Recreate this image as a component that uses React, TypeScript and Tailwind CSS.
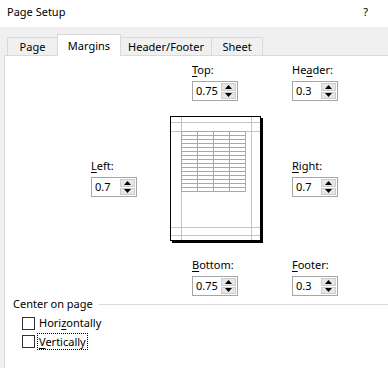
import React from "react";

function Tri({ up }: { up?: boolean }) {
  return (
    <svg width="7" height="4" viewBox="0 0 7 4" className="block">
      {up ? <path d="M0 4 L3.5 0 L7 4 Z" fill="#000" /> : <path d="M0 0 L7 0 L3.5 4 Z" fill="#000" />}
    </svg>
  );
}

function Spin({ pre, u, post, value }: { pre: string; u: string; post: string; value: string }) {
  return (
    <div className="flex flex-col">
      <div className="h-[16px] leading-[16px] text-black whitespace-nowrap">
        {pre}
        <span className="underline underline-offset-2">{u}</span>
        {post}
      </div>
      <div className="mt-[3px] w-[46px] h-[20px] border border-[#a6a6a6] bg-white flex items-center">
        <div className="flex-1 pl-[3px] leading-[16px] text-black">{value}</div>
        <div className="w-[15px] h-[16px] mr-[1px] flex flex-col gap-[1px]">
          <div className="flex-1 bg-[#e6e6e6] border border-[#cdcdcd] flex items-center justify-center">
            <Tri up />
          </div>
          <div className="flex-1 bg-[#e6e6e6] border border-[#cdcdcd] flex items-center justify-center">
            <Tri />
          </div>
        </div>
      </div>
    </div>
  );
}

function PagePreview() {
  const rows: number[] = [];
  for (let k = 0; k <= 15; k++) rows.push(15.5 + 4 * k);
  const cols = [11.5, 27.5, 43.5, 59.5, 75.5];
  return (
    <svg width="93" height="127" viewBox="0 0 93 127" className="block shrink-0">
      <rect x="2" y="2" width="91" height="125" fill="#000" />
      <rect x="0.5" y="0.5" width="90" height="124" fill="#fff" stroke="#000" />
      <g stroke="#c4c4c4" strokeWidth="1">
        <line x1="11.5" y1="1" x2="11.5" y2="124" />
        <line x1="81.5" y1="1" x2="81.5" y2="124" />
        <line x1="1" y1="6.5" x2="90" y2="6.5" />
        <line x1="1" y1="15.5" x2="90" y2="15.5" />
        <line x1="1" y1="111.5" x2="90" y2="111.5" />
        <line x1="1" y1="119.5" x2="90" y2="119.5" />
      </g>
      <g stroke="#a8a8a8" strokeWidth="1">
        {cols.map((x) => (
          <line key={"c" + x} x1={x} y1="15.5" x2={x} y2="75.5" />
        ))}
        {rows.map((y) => (
          <line key={"r" + y} x1="11.5" y1={y} x2="75.5" y2={y} />
        ))}
      </g>
    </svg>
  );
}

export default function App() {
  return (
    <div className="w-[388px] h-[368px] overflow-hidden bg-white flex flex-col font-['Noto_Sans',sans-serif] text-[11px] text-black">
      <div className="h-[27px] shrink-0 flex justify-between pt-[4px] pl-[7px] pr-[20px] leading-[16px]">
        <span>Page Setup</span>
        <span>?</span>
      </div>
      <div className="flex-1 bg-[#f0f0f0] pl-[4px] flex flex-col">
        <div className="h-[28px] shrink-0 flex items-end pl-[3px] relative z-10">
          <div className="w-[51px] h-[18px] border-t border-l border-r border-[#d9d9d9] bg-[#f0f0f0] flex items-center justify-center leading-[16px]">
            Page
          </div>
          <div className="w-[64px] h-[22px] -ml-px -mb-px border-t border-l border-r border-[#d9d9d9] bg-white flex justify-center pt-[3px] leading-[16px] relative z-10">
            Margins
          </div>
          <div className="w-[92px] h-[18px] -ml-px border-t border-l border-r border-[#d9d9d9] bg-[#f0f0f0] flex items-center justify-center leading-[16px]">
            Header/Footer
          </div>
          <div className="w-[52px] h-[18px] -ml-px border-t border-l border-r border-[#d9d9d9] bg-[#f0f0f0] flex items-center justify-center leading-[16px]">
            Sheet
          </div>
        </div>
        <div className="flex-1 bg-white border-t border-l border-[#d9d9d9] flex flex-col">
          <div className="flex pt-[6px] pl-[187px]">
            <div className="w-[100px]">
              <Spin pre="" u="T" post="op:" value="0.75" />
            </div>
            <Spin pre="He" u="a" post="der:" value="0.3" />
          </div>
          <div className="flex items-start mt-[15px] pl-[86px]">
            <div className="w-[79px] mt-[42px]">
              <Spin pre="" u="L" post="eft:" value="0.7" />
            </div>
            <PagePreview />
            <div className="ml-[29px] mt-[42px]">
              <Spin pre="" u="R" post="ight:" value="0.7" />
            </div>
          </div>
          <div className="flex mt-[14px] pl-[187px]">
            <div className="w-[100px]">
              <Spin pre="" u="B" post="ottom:" value="0.75" />
            </div>
            <Spin pre="" u="F" post="ooter:" value="0.3" />
          </div>
          <div className="flex items-center h-[16px] pl-[8px] leading-[16px]">
            <span>Center on page</span>
            <div className="flex-1 h-px bg-[#dcdcdc] ml-[6px]" />
          </div>
          <div className="flex items-center h-[16px] mt-[3px] pl-[17px]">
            <div className="w-[13px] h-[13px] border border-[#333] bg-white" />
            <span className="ml-[4px] leading-[16px]">
              Hori<span className="underline underline-offset-2">z</span>ontally
            </span>
          </div>
          <div className="flex items-center h-[17px] mt-[2px] pl-[17px]">
            <div className="w-[13px] h-[13px] border border-[#333] bg-white" />
            <span className="ml-[2px] h-[17px] leading-[15px] border border-dotted border-black px-px">
              <span className="underline underline-offset-2">V</span>ertically
            </span>
          </div>
        </div>
      </div>
    </div>
  );
}
